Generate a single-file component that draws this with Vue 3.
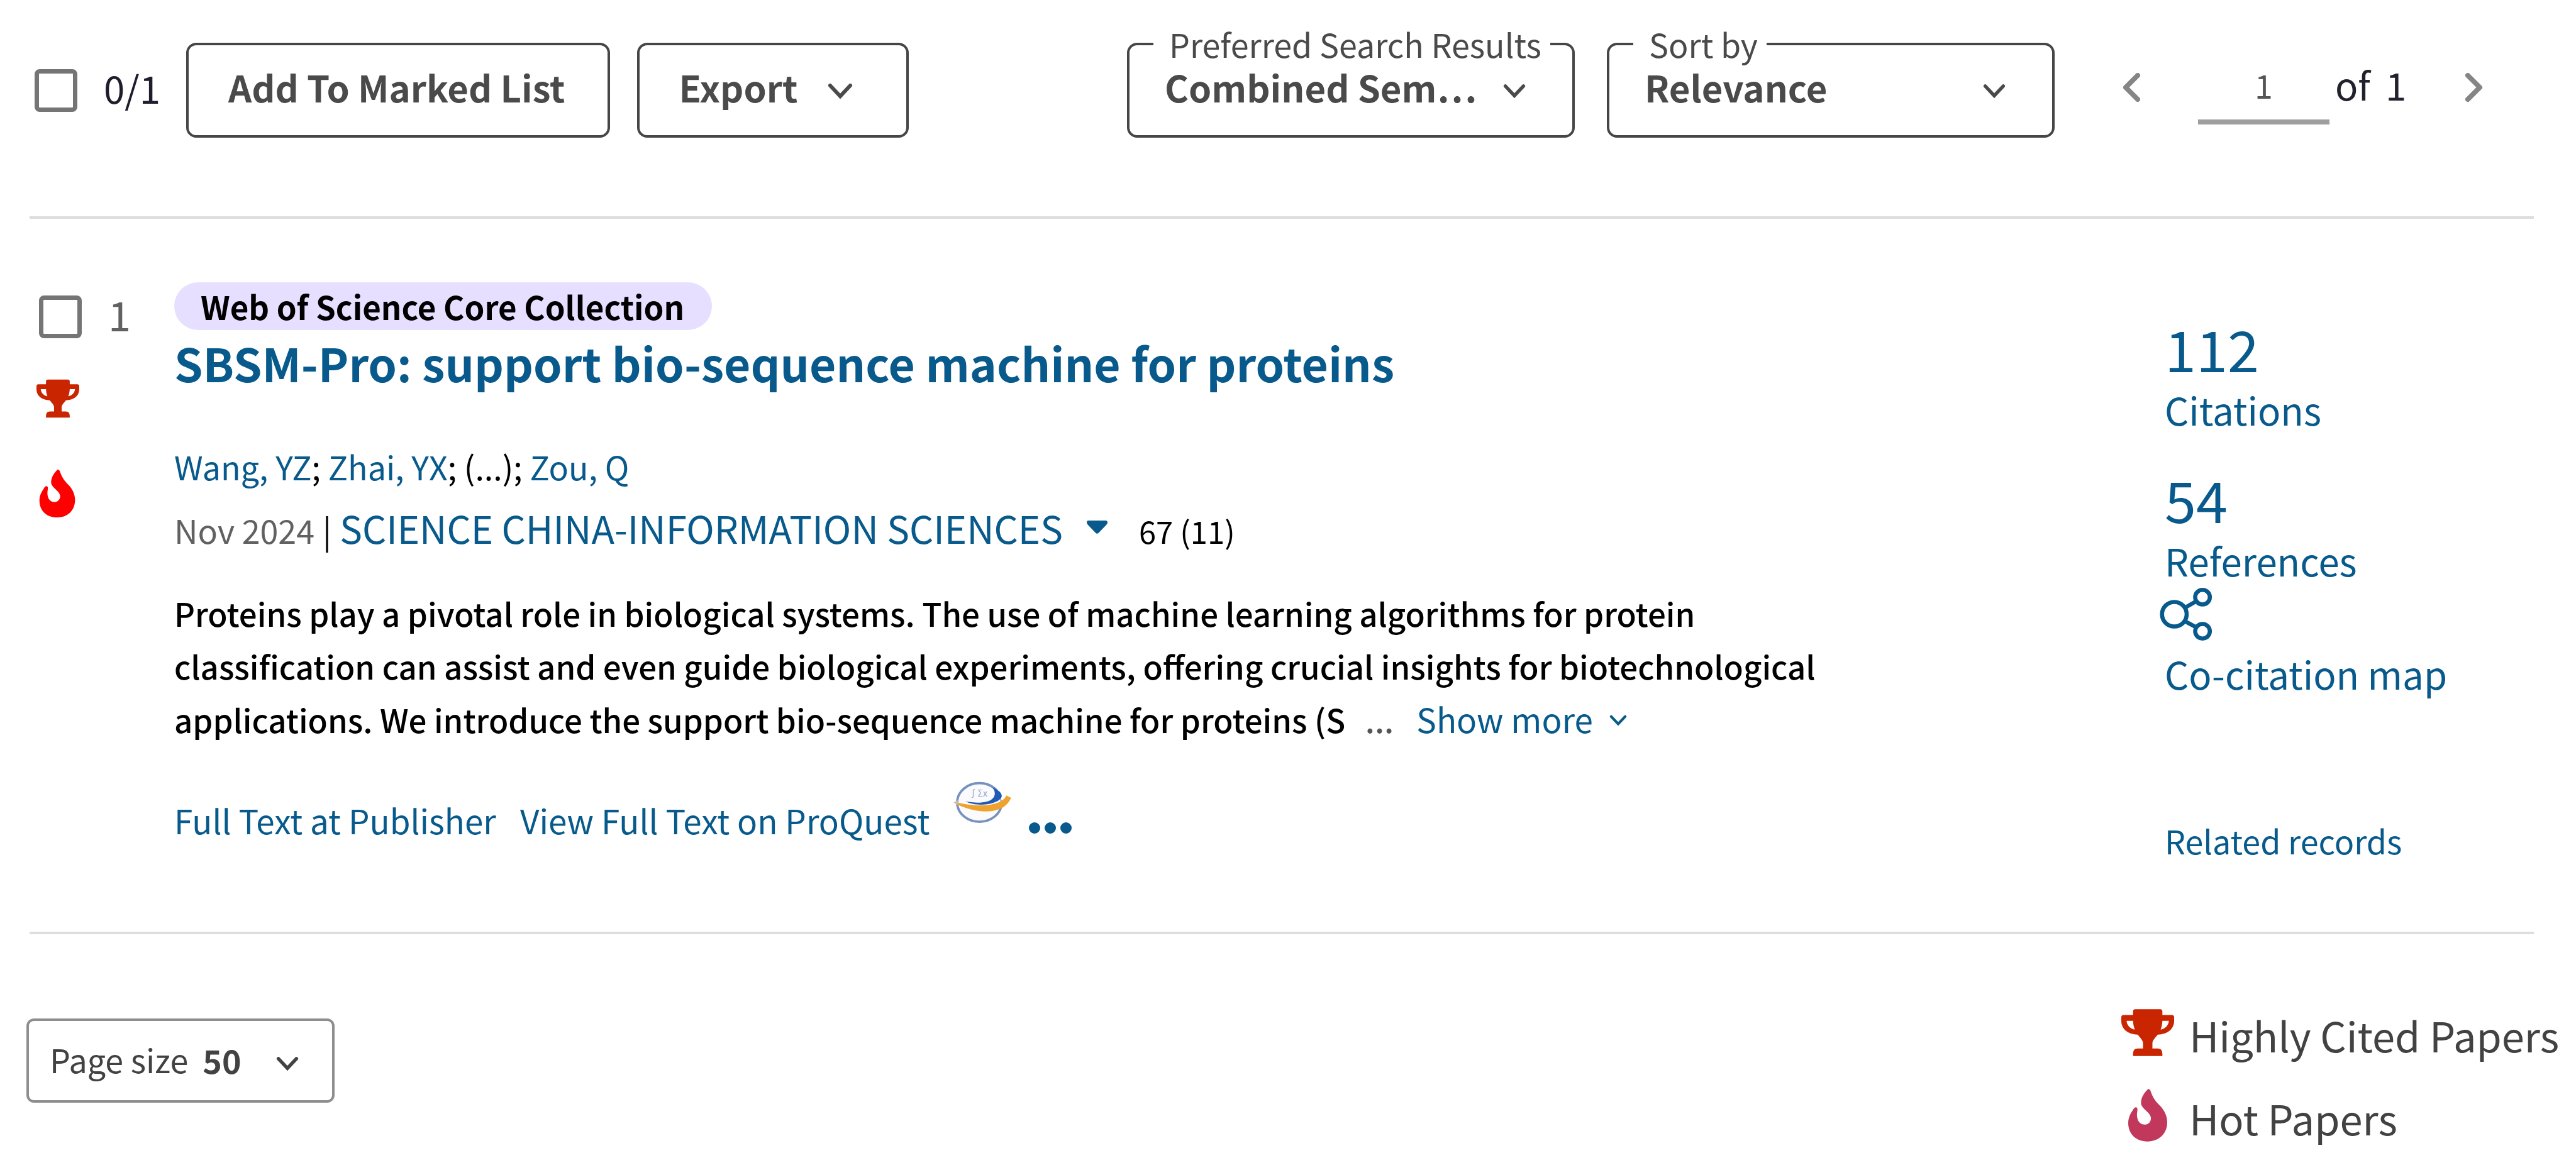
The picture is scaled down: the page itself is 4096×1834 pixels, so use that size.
<script setup>
import { ref } from 'vue'

const searchMode = ref('semantic')
const sortBy = ref('relevance')
const pageSize = ref('50')
const page = ref('1')
</script>

<template>
  <svg class="defs" aria-hidden="true">
    <symbol id="trophy" viewBox="0 0 90 80">
      <path fill-rule="evenodd" d="M24 0H66Q70 0 70 4V10H86Q90 10 90 14V20C90 34 79 43 62 43.500C58 49 53 53 53 58V67H62Q70 67 70 76V80H20V76Q20 67 28 67H37V58C37 53 32 49 28 43.500C11 43 0 34 0 20V14Q0 10 4 10H20V4Q20 0 24 0ZM9 20C9.500 27 14 33 23 35C21 30 20.300 25 20 20ZM81 20C80.500 27 76 33 67 35C69 30 69.700 25 70 20Z" />
    </symbol>
    <symbol id="flame" viewBox="0 0 67 90">
      <path d="M34 0C28 6 22 14 22 24C22 34 39 40 39 50C39 57 34 61 28 61C20 61 15 54 15 44C15 39 17 34 15 32C13 30 10 32 8 36C3 43 0 50 0 58C0 78 14 90 33 90C53 90 67 77 67 57C67 46 62 36 54 28C46 20 42 14 38 2Q36 -1 34 0Z" />
    </symbol>
    <symbol id="chevron" viewBox="0 0 40 26">
      <path d="M4 4L20 21L36 4" fill="none" stroke="currentColor" stroke-width="6" stroke-linecap="round" />
    </symbol>
    <symbol id="angle" viewBox="0 0 28 46">
      <path d="M24 4L5 23L24 42" fill="none" stroke="currentColor" stroke-width="8" stroke-linecap="round" stroke-linejoin="round" />
    </symbol>
  </svg>

  <main class="results">
    <header class="toolbar">
      <label class="select-all">
        <input type="checkbox" class="tick" />
        <span>0/1</span>
      </label>
      <button type="button" class="action">Add To Marked List</button>
      <button type="button" class="action">
        Export
        <svg class="chevron"><use href="#chevron" /></svg>
      </button>

      <div class="pickers">
        <fieldset class="picker">
          <legend><label for="mode">Preferred Search Results</label></legend>
          <select id="mode" v-model="searchMode">
            <option value="semantic">Combined Sem…</option>
          </select>
          <svg class="chevron small"><use href="#chevron" /></svg>
        </fieldset>
        <fieldset class="picker">
          <legend><label for="sort">Sort by</label></legend>
          <select id="sort" v-model="sortBy">
            <option value="relevance">Relevance</option>
          </select>
          <svg class="chevron small"><use href="#chevron" /></svg>
        </fieldset>
      </div>

      <nav class="pager" aria-label="Pages">
        <button type="button" class="step" aria-label="Previous page">
          <svg><use href="#angle" /></svg>
        </button>
        <input v-model="page" type="text" class="page-number" aria-label="Page number" />
        <span class="page-total"><span>of</span><span>1</span></span>
        <button type="button" class="step next" aria-label="Next page">
          <svg><use href="#angle" /></svg>
        </button>
      </nav>
    </header>

    <hr />

    <article class="record">
      <div class="marks">
        <label class="record-pick">
          <input type="checkbox" class="tick" />
          <span>1</span>
        </label>
        <svg class="trophy"><use href="#trophy" /></svg>
        <svg class="flame"><use href="#flame" /></svg>
      </div>

      <div class="details">
        <span class="badge">Web of Science Core Collection</span>
        <h2><a href="#record">SBSM-Pro: support bio-sequence machine for proteins</a></h2>
        <p class="authors">
          <a href="#wang">Wang, YZ</a>; <a href="#zhai">Zhai, YX</a>; (...); <a href="#zou">Zou, Q</a>
        </p>
        <p class="source">
          <span class="date">Nov 2024</span>
          <span class="bar">|</span>
          <a class="journal" href="#journal">SCIENCE CHINA-INFORMATION SCIENCES</a>
          <button type="button" class="journal-menu" aria-label="Journal information">
            <svg viewBox="0 0 33 21"><path d="M3 0H30Q33 0 33 3Q33 5 31 7L19 19.500Q16.500 22 14 19.500L2 7Q0 5 0 3Q0 0 3 0Z" fill="currentColor" /></svg>
          </button>
          <span class="volume">67 (11)</span>
        </p>
        <p class="abstract">
          Proteins play a pivotal role in biological systems. The use of machine learning algorithms for protein
          classification can assist and even guide biological experiments, offering crucial insights for biotechnological
          applications. We introduce the support bio-sequence machine for proteins (S
          <span class="more-dots">...</span>
          <button type="button" class="more">Show more<svg class="chevron tiny"><use href="#chevron" /></svg></button>
        </p>
        <div class="links">
          <a href="#publisher">Full Text at Publisher</a>
          <a href="#proquest">View Full Text on ProQuest</a>
          <a class="resolver" href="#resolver" aria-label="Library link">
            <svg viewBox="0 0 98 73">
              <ellipse cx="44" cy="37" rx="38" ry="33" fill="#fbfbfd" stroke="#7691bf" stroke-width="4" />
              <path d="M74 12L98 29L82 34Z" fill="#fff" />
              <text x="26" y="27" font-size="15" fill="#8ea5cc">∫Σx</text>
              <path d="M20 35C44 40 68 37 70 24C71 19 69 15 66 11C77 16 83 21 82 27C78 40 40 46 20 35Z" fill="#1f5bb5" />
              <path d="M2 36C26 43 80 48 90 25L98 29C84 63 30 54 2 38Z" fill="#f0a22e" />
              <path d="M0 37L7 33V41Z" fill="#c9bfae" />
            </svg>
          </a>
          <button type="button" class="dots" aria-label="More links">
            <svg viewBox="0 0 68 18"><g fill="currentColor"><circle cx="9" cy="9" r="9" /><circle cx="34" cy="9" r="9" /><circle cx="59" cy="9" r="9" /></g></svg>
          </button>
        </div>
      </div>

      <aside class="metrics">
        <a class="metric" href="#citations"><span class="count">112</span>Citations</a>
        <a class="metric" href="#references"><span class="count">54</span>References</a>
        <a class="metric map" href="#map">
          <svg viewBox="0 0 90 90"><g fill="none" stroke="currentColor" stroke-width="7"><circle cx="25" cy="45" r="21" /><circle cx="73" cy="16" r="12.500" /><circle cx="73" cy="74" r="12.500" /><path d="M43 34L62 23M43 57L62 67" /></g></svg>
          Co-citation map
        </a>
        <a class="related" href="#related">Related records</a>
      </aside>
    </article>

    <hr />

    <footer class="foot">
      <div class="page-size">
        <label for="size">Page size</label>
        <select id="size" v-model="pageSize">
          <option value="50">50</option>
        </select>
        <svg class="chevron small"><use href="#chevron" /></svg>
      </div>
      <ul class="legend">
        <li><svg class="trophy"><use href="#trophy" /></svg>Highly Cited Papers</li>
        <li><svg class="flame"><use href="#flame" /></svg>Hot Papers</li>
      </ul>
    </footer>
  </main>
</template>

<style>
body {
  background: #fff;
}
</style>

<style scoped>
.defs {
  position: absolute;
  width: 0;
  height: 0;
}

.results,
.results button,
.results input,
.results select {
  font-family: "Noto Sans CJK KR", "Noto Sans", sans-serif;
}

.results {
  color: #000;
  font-size: 52px;
  line-height: 84px;
}

.results svg {
  display: block;
  flex: none;
}

a {
  color: #075a8b;
  text-decoration: none;
}

button {
  margin: 0;
  padding: 0;
  border: 0;
  background: none;
  color: inherit;
  font-size: inherit;
  font-weight: inherit;
  line-height: inherit;
}

select {
  appearance: none;
  margin: 0;
  border: 0;
  background: none;
  color: inherit;
  font-weight: 700;
}

hr {
  height: 4px;
  margin: 0 67px 0 47px;
  border: 0;
  background: #ddd;
}

.tick {
  appearance: none;
  box-sizing: border-box;
  width: 68px;
  height: 68px;
  margin: 0;
  border: 7px solid #757575;
  border-radius: 8px;
}

.chevron {
  width: 40px;
  height: 26px;
}

.chevron.small {
  width: 36px;
  height: 24px;
}

.chevron.tiny {
  width: 28px;
  height: 18px;
}

.toolbar {
  display: flex;
  align-items: flex-end;
  padding: 40px 148px 125px 55px;
}

.select-all {
  display: flex;
  align-items: center;
  gap: 42px;
  width: 241px;
  height: 151px;
  color: #1d1d2b;
  font-size: 60px;
}

.select-all span,
.record-pick span {
  margin-bottom: 10px;
}

.action {
  display: flex;
  align-items: center;
  box-sizing: border-box;
  height: 151px;
  margin-right: 43px;
  padding: 0 67px 12px 63px;
  border: 4px solid #464646;
  border-radius: 16px;
  color: #4a4a4a;
  font-size: 58px;
  font-weight: 700;
}

.action .chevron {
  margin: 14px 18px 0 48px;
}

.pickers {
  display: flex;
  gap: 51px;
  margin-left: auto;
}

.picker {
  position: relative;
  box-sizing: border-box;
  width: 712px;
  height: 179px;
  margin: 0;
  padding: 0;
  border: 4px solid #464646;
  border-radius: 16px;
  color: #4a4a4a;
}

.picker legend {
  margin-left: 38px;
  padding: 0 14px 0 25px;
  line-height: 60px;
}

.picker select {
  display: block;
  width: 100%;
  height: 84px;
  margin-top: -4px;
  padding: 0 110px 0 56px;
  font-size: 58px;
}

.picker .chevron {
  position: absolute;
  top: 33px;
  right: 74px;
}

.pager {
  display: flex;
  align-items: center;
  height: 151px;
  margin-left: 108px;
}

.step {
  width: 28px;
  height: 46px;
  margin-bottom: 10px;
  color: #858585;
}

.step svg {
  width: 28px;
  height: 46px;
}

.step.next svg {
  transform: scaleX(-1);
}

.page-number {
  box-sizing: border-box;
  width: 209px;
  height: 108px;
  margin: 0 9px 0 92px;
  padding: 0 0 10px;
  border: 0;
  border-bottom: 8px solid #9e9e9e;
  background: none;
  color: #555;
  font-size: 52px;
  text-align: center;
}

.page-total {
  display: flex;
  gap: 24px;
  width: 207px;
  margin-bottom: 20px;
  color: #22222f;
  font-size: 60px;
}

.record {
  display: flex;
  padding-bottom: 103px;
}

.marks {
  flex: none;
  box-sizing: border-box;
  width: 277px;
  padding: 122px 0 0 62px;
}

.record-pick {
  display: flex;
  align-items: center;
  gap: 42px;
  height: 68px;
  color: #616161;
  font-size: 65px;
}

.marks .trophy {
  width: 68px;
  height: 62px;
  margin-top: 65px;
  margin-left: -4px;
  fill: #c92500;
}

.marks .flame {
  width: 58px;
  height: 76px;
  margin-top: 82px;
  fill: #f00;
}

.details {
  flex: 1;
  padding-top: 101px;
}

.badge {
  display: block;
  width: fit-content;
  height: 76px;
  padding: 0 44px 0 42px;
  border-radius: 38px;
  background: #e7dfff;
  font-weight: 700;
  font-size: 51px;
  line-height: 76px;
}

h2 {
  margin: 0;
  font-size: 73px;
  font-weight: 700;
  line-height: 102px;
}

p {
  margin: 0;
}

.authors {
  margin-top: 73px;
}

.source {
  display: flex;
  align-items: baseline;
  margin-top: 7px;
  line-height: 96px;
}

.date {
  color: #616161;
}

.bar {
  margin: 0 13px;
}

.journal {
  font-size: 60px;
}

.journal-menu {
  align-self: center;
  width: 33px;
  height: 21px;
  margin: 0 50px 6px 38px;
  color: #075a8b;
}

.journal-menu svg {
  width: 33px;
  height: 21px;
}

.volume {
  font-size: 49px;
}

.abstract {
  max-width: 2700px;
  margin-top: 41px;
  font-size: 51px;
  font-weight: 500;
}

.more-dots {
  margin: 0 36px 0 20px;
  color: #555;
}

.more {
  display: inline-flex;
  align-items: center;
  gap: 26px;
  color: #075a8b;
  font-size: 53px;
  font-weight: 400;
}

.more .chevron {
  margin-top: 6px;
}

.links {
  display: flex;
  align-items: flex-end;
  gap: 38px;
  height: 92px;
  margin-top: 56px;
  font-size: 53px;
  line-height: 60px;
}

.resolver svg {
  width: 92px;
  height: 68px;
  margin-bottom: 24px;
}

.dots {
  height: 18px;
  margin-bottom: 8px;
  margin-left: -10px;
  color: #075a8b;
}

.dots svg {
  width: 68px;
  height: 18px;
}

.metrics {
  flex: none;
  width: 654px;
  padding-top: 149px;
}

.metric {
  display: block;
  margin-bottom: 44px;
  font-size: 60px;
}

.count {
  display: block;
  font-size: 90px;
  line-height: 112px;
}

.map {
  margin-top: -42px;
  margin-bottom: 0;
}

.map svg {
  width: 84px;
  height: 84px;
  margin: 0 0 10px -8px;
}

.related {
  display: block;
  margin-top: 182px;
  font-size: 52px;
}

.foot {
  display: flex;
  justify-content: space-between;
  align-items: flex-start;
}

.page-size {
  display: flex;
  align-items: center;
  box-sizing: border-box;
  width: 490px;
  height: 134px;
  margin: 134px 0 0 42px;
  padding: 0 53px 4px 33px;
  border: 4px solid #8e8e8e;
  border-radius: 12px;
  color: #424242;
}

.page-size select {
  width: 60px;
  margin: 0 auto 0 23px;
  padding: 0;
  font-size: 52px;
}

.page-size .chevron {
  margin-top: 14px;
}

.legend {
  display: flex;
  flex-direction: column;
  gap: 36px;
  width: 723px;
  margin: 112px 0 0;
  padding: 0;
  color: #424242;
  font-size: 65px;
  line-height: 96px;
  list-style: none;
}

.legend li {
  display: flex;
  align-items: center;
  white-space: nowrap;
}

.legend .trophy {
  width: 84px;
  height: 75px;
  margin-right: 24px;
  margin-bottom: 8px;
  fill: #c92500;
}

.legend .flame {
  width: 62px;
  height: 84px;
  margin: 0 35px 8px 11px;
  fill: #c2385c;
}
</style>
